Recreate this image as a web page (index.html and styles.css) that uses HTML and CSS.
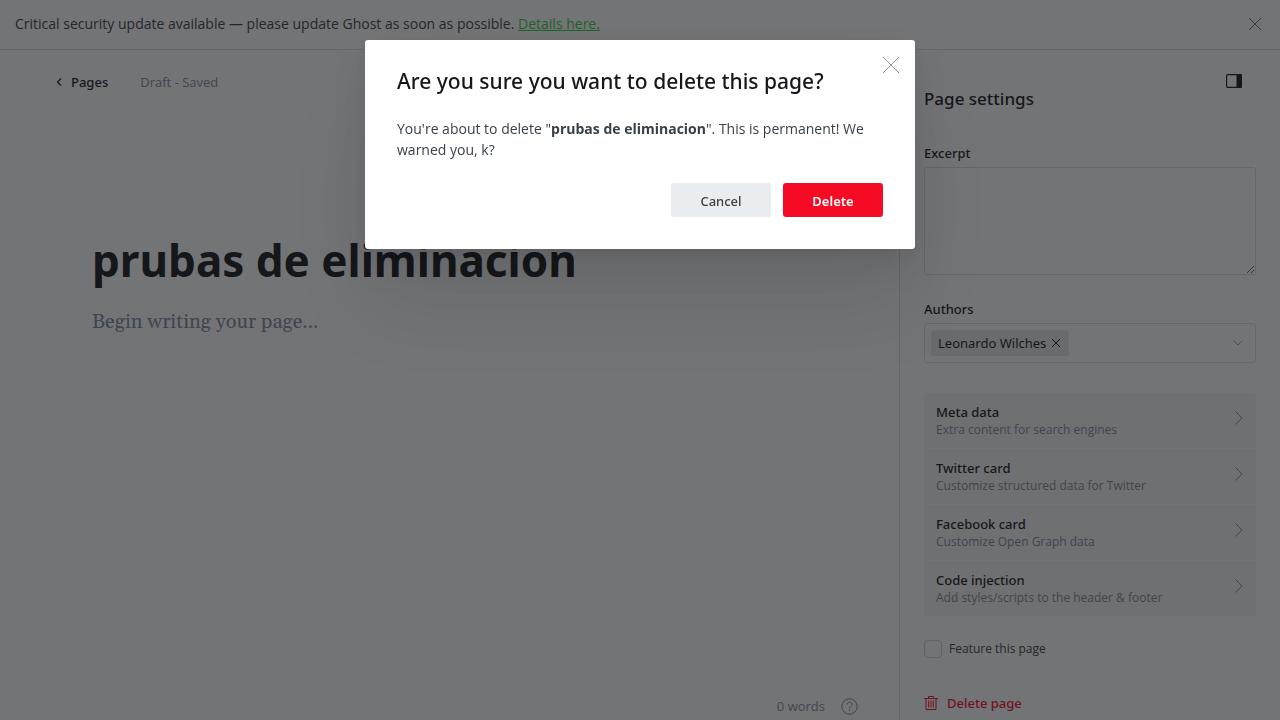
FILE: index.html
```
<!DOCTYPE html>
<html lang="en">
<head>
<meta charset="utf-8">
<title>Page settings</title>
<link rel="stylesheet" href="styles.css">
</head>
<body>
<div class="app">
  <header class="alert">
    <p class="alert-text">Critical security update available — please update Ghost as soon as possible. <a class="alert-link" href="#">Details here.</a></p>
    <button class="icon-button" aria-label="Dismiss"><svg width="12" height="12" viewBox="0 0 12 12" fill="none" stroke="#394047" stroke-width=".8"><path d="M0 0 12 12M12 0 0 12"/></svg></button>
  </header>
  <div class="workspace">
    <main class="editor">
      <nav class="editor-nav">
        <a class="back" href="#"><svg width="6" height="8" viewBox="0 0 6 8" fill="none" stroke="#15171a" stroke-width="1.2"><path d="M5 .5 1.500 4 5 7.500"/></svg>Pages</a>
        <span class="status">Draft - Saved</span>
      </nav>
      <article class="canvas">
        <h1 class="title">prubas de eliminacion</h1>
        <p class="placeholder">Begin writing your page...</p>
      </article>
      <footer class="editor-footer">
        <span>0 words</span>
        <button class="icon-button" aria-label="Help"><svg width="17" height="17" viewBox="0 0 17 17" fill="none" stroke="#7c8b9a"><circle cx="8.500" cy="8.500" r="7.700"/><path d="M6 6.700C6 5 7 4.200 8.500 4.200S11 5.200 11 6.500C11 8.300 8.500 8.300 8.500 10.500M8.500 11.800V13"/></svg></button>
      </footer>
    </main>
    <aside class="sidebar">
      <div class="sidebar-head">
        <h2 class="sidebar-title">Page settings</h2>
        <button class="icon-button panel-toggle" aria-label="Toggle settings"><svg width="16" height="14" viewBox="0 0 16 14"><rect x=".6" y=".6" width="14.800" height="12.800" rx="1.200" fill="none" stroke="#15171a" stroke-width="1.200"/><path d="M10.500 0H14.500Q16 0 16 1.500V12.500Q16 14 14.500 14H10.500Z" fill="#15171a"/></svg></button>
      </div>
      <label class="label" for="excerpt">Excerpt</label>
      <textarea class="excerpt" id="excerpt"></textarea>
      <div class="label" id="authors">Authors</div>
      <div class="token-field" role="group" aria-labelledby="authors">
        <span class="token">Leonardo Wilches<button class="icon-button" aria-label="Remove Leonardo Wilches"><svg width="8" height="8" viewBox="0 0 8 8" fill="none" stroke="#15171a"><path d="M0 0 8 8M8 0 0 8"/></svg></button></span>
        <button class="icon-button" aria-label="Choose authors"><svg width="10" height="6" viewBox="0 0 10 6" fill="none" stroke="#9aa5b0"><path d="M.5.5 5 5 9.500.5"/></svg></button>
      </div>
      <div class="settings-list">
        <button class="setting"><span class="setting-text"><span class="setting-name">Meta data</span><span class="setting-note">Extra content for search engines</span></span><svg class="chevron" viewBox="0 0 8 14"><path d="M.5.5 7 7 .5 13.500"/></svg></button>
        <button class="setting"><span class="setting-text"><span class="setting-name">Twitter card</span><span class="setting-note">Customize structured data for Twitter</span></span><svg class="chevron" viewBox="0 0 8 14"><path d="M.5.5 7 7 .5 13.500"/></svg></button>
        <button class="setting"><span class="setting-text"><span class="setting-name">Facebook card</span><span class="setting-note">Customize Open Graph data</span></span><svg class="chevron" viewBox="0 0 8 14"><path d="M.5.5 7 7 .5 13.500"/></svg></button>
        <button class="setting"><span class="setting-text"><span class="setting-name">Code injection</span><span class="setting-note">Add styles/scripts to the header &amp; footer</span></span><svg class="chevron" viewBox="0 0 8 14"><path d="M.5.5 7 7 .5 13.500"/></svg></button>
      </div>
      <label class="feature"><input class="checkbox" type="checkbox">Feature this page</label>
      <button class="delete-page"><svg width="14" height="14" viewBox="0 0 14 14" fill="none" stroke="#f50b23"><path d="M0 2.500H14M4.500 2.500V.5H9.500V2.500M2 2.500V13.500H12V2.500M4.700 4.500V11.500M7 4.500V11.500M9.300 4.500V11.500"/></svg>Delete page</button>
    </aside>
  </div>
</div>
<div class="overlay">
  <section class="modal" role="dialog" aria-modal="true" aria-labelledby="modal-title">
    <button class="icon-button modal-close" aria-label="Close"><svg width="16" height="16" viewBox="0 0 16 16" fill="none" stroke="#90959a"><path d="M0 0 16 16M16 0 0 16"/></svg></button>
    <h2 class="modal-title" id="modal-title">Are you sure you want to delete this page?</h2>
    <p class="modal-text">You're about to delete "<strong>prubas de eliminacion</strong>". This is permanent! We warned you, k?</p>
    <div class="modal-actions">
      <button class="button">Cancel</button>
      <button class="button button-danger">Delete</button>
    </div>
  </section>
</div>
</body>
</html>
```
FILE: styles.css
```
* {
  box-sizing: border-box;
}

body {
  margin: 0;
  background: #fff;
  color: #15171a;
  font-family: "Noto Sans", "Open Sans", sans-serif;
  font-size: 13px;
  line-height: 20px;
}

h1, h2, p {
  margin: 0;
}

button {
  font: inherit;
  color: inherit;
  border: 0;
  padding: 0;
  background: none;
  cursor: pointer;
}

.icon-button {
  display: flex;
}

.alert-text,
.status,
.setting-note,
.feature,
.editor-footer,
.modal-text {
  font-family: "Open Sans", "Noto Sans", sans-serif;
}

.app {
  display: flex;
  flex-direction: column;
  height: 100vh;
  overflow: hidden;
}

.alert {
  display: flex;
  flex: none;
  align-items: center;
  justify-content: space-between;
  padding: 14px 19px 15px 15px;
  border-bottom: 1px solid #dae1e3;
}

.alert-text {
  color: #394047;
  font-size: 14px;
}

.alert-link {
  color: #30cf43;
}

.workspace {
  display: flex;
  flex: 1;
  min-height: 0;
}

.editor {
  display: flex;
  flex: 1;
  flex-direction: column;
}

.editor-nav {
  display: flex;
  align-items: center;
  gap: 32px;
  padding: 22px 56px;
}

.back {
  display: flex;
  align-items: center;
  gap: 9px;
  color: #15171a;
  font-weight: 500;
  text-decoration: none;
}

.status {
  color: #7c8b9a;
}

.canvas {
  flex: 1;
  padding: 116px 92px 0;
}

.title {
  font-size: 44px;
  line-height: 60px;
  font-weight: 700;
}

.placeholder {
  margin-top: 18px;
  color: #7c8b9a;
  font-family: Gelasio, Georgia, "Noto Serif", "DejaVu Serif", "Liberation Serif", serif;
  font-size: 20px;
  line-height: 28px;
}

.editor-footer {
  display: flex;
  align-items: center;
  justify-content: flex-end;
  gap: 16px;
  padding: 0 41px 4px;
  color: #7c8b9a;
}

.sidebar {
  flex: none;
  width: 381px;
  padding: 23px 24px;
  border-left: 1px solid #dae1e3;
}

.sidebar-head {
  display: flex;
  justify-content: space-between;
  margin-bottom: 32px;
  padding-right: 14px;
}

.sidebar-title {
  padding-top: 14px;
  font-size: 17px;
  line-height: 24px;
  font-weight: 500;
}

.panel-toggle {
  align-self: flex-start;
  padding-top: 1px;
}

.label {
  display: block;
  margin-bottom: 4px;
  font-weight: 500;
  line-height: 20px;
}

.excerpt {
  display: block;
  width: 100%;
  height: 108px;
  margin-bottom: 24px;
  border: 1px solid #dae1e3;
  border-radius: 3px;
  background: #fff;
  resize: vertical;
}

.token-field {
  display: flex;
  align-items: center;
  justify-content: space-between;
  padding: 6px 12px 6px 6px;
  border: 1px solid #dae1e3;
  border-radius: 3px;
}

.token {
  display: flex;
  align-items: center;
  gap: 6px;
  padding: 3px 9px 3px 7px;
  border-radius: 3px;
  background: #e5e9ed;
}

.settings-list {
  margin-top: 30px;
  overflow: hidden;
  border-radius: 3px;
  background: #f4f5f6;
}

.setting {
  display: flex;
  align-items: center;
  justify-content: space-between;
  width: 100%;
  padding: 10px 13px 9px 12px;
  text-align: left;
}

.setting + .setting {
  border-top: 1px solid #fff;
}

.setting-text {
  display: flex;
  flex-direction: column;
}

.setting-name {
  font-weight: 500;
  line-height: 18px;
}

.setting-note {
  color: #7c8b9a;
  font-size: 12px;
  line-height: 18px;
}

.chevron {
  width: 8px;
  height: 14px;
  margin-bottom: 6px;
  fill: none;
  stroke: #7c8b9a;
}

.feature {
  display: flex;
  align-items: center;
  gap: 7px;
  margin-top: 23px;
  color: #394047;
  font-size: 12px;
}

.checkbox {
  appearance: none;
  width: 18px;
  height: 18px;
  margin: 0;
  border: 1px solid #c5d2d9;
  border-radius: 4px;
}

.delete-page {
  display: flex;
  align-items: center;
  gap: 9px;
  margin-top: 34px;
  color: #f50b23;
  font-weight: 500;
}

.overlay {
  position: fixed;
  inset: 0;
  padding: 40px 16px;
  background: rgba(21, 23, 26, 0.6);
}

.modal {
  position: relative;
  max-width: 550px;
  margin: 0 auto;
  padding: 26px 32px 32px;
  border-radius: 3px;
  background: #fff;
  box-shadow: 0 4px 10px rgba(0, 0, 0, 0.05), 0 16px 36px rgba(0, 0, 0, 0.08), 0 60px 80px rgba(0, 0, 0, 0.08);
}

.modal-close {
  position: absolute;
  top: 17px;
  right: 16px;
}

.modal-title {
  font-size: 21px;
  line-height: 30px;
  font-weight: 500;
}

.modal-text {
  margin-top: 22px;
  color: #394047;
  font-size: 14px;
  line-height: 21px;
}

.modal-actions {
  display: flex;
  justify-content: flex-end;
  gap: 12px;
  margin-top: 23px;
}

.button {
  width: 100px;
  height: 34px;
  padding-top: 2px;
  border-radius: 3px;
  background: #e9edf0;
  color: #394047;
  font-weight: 500;
}

.button-danger {
  background: #f50b23;
  color: #fff;
  font-weight: 600;
}
```
